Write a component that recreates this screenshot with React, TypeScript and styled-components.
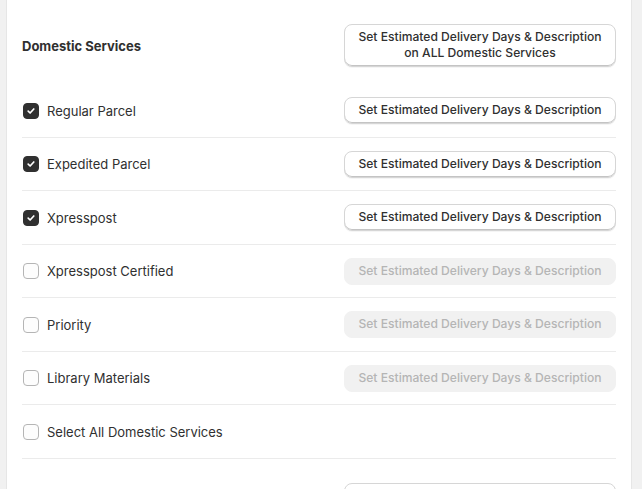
import React, {useState} from 'react';
import styled, {createGlobalStyle, css} from 'styled-components';

const GlobalStyle = createGlobalStyle`
    html, body {
        margin: 0;
        padding: 0;
        background: #f1f1f1;
        font-family: Inter, "Noto Sans", "Liberation Sans", sans-serif;
        color: #303030;
        -webkit-font-smoothing: antialiased;
    }
`;

interface Service {
    id: string;
    label: string;
    checked: boolean;
}

const initialServices: Service[] = [
    {id: 'regular', label: 'Regular Parcel', checked: true},
    {id: 'expedited', label: 'Expedited Parcel', checked: true},
    {id: 'xpresspost', label: 'Xpresspost', checked: true},
    {id: 'xpresspost-certified', label: 'Xpresspost Certified', checked: false},
    {id: 'priority', label: 'Priority', checked: false},
    {id: 'library', label: 'Library Materials', checked: false},
];

const BUTTON_LABEL = 'Set Estimated Delivery Days & Description';

const Page = styled.div`
    padding: 0 10px 0 6px;
    height: 489px;
    overflow: hidden;
`;

const Card = styled.div`
    background: #ffffff;
    border-left: 1px solid #e6e6e6;
    border-right: 1px solid #e6e6e6;
    padding: 24px 15px 0;
    min-height: 100%;
    box-sizing: border-box;
`;

const HeaderRow = styled.div<{next?: boolean}>`
    display: flex;
    align-items: center;
    justify-content: space-between;
    padding-top: ${({next}) => (next ? '24.5px' : '0')};
    padding-bottom: 17px;
`;

const Title = styled.h2`
    margin: 0;
    font-size: 13px;
    font-weight: 650;
    line-height: 20px;
    color: #303030;
`;

const Row = styled.div`
    display: flex;
    align-items: center;
    justify-content: space-between;
    min-height: 27px;
    padding: 13px 0 12.5px;
    border-bottom: 1px solid #ebebeb;
`;

const CheckLabel = styled.label`
    display: flex;
    align-items: center;
    gap: 8px;
    padding-left: 1px;
    font-size: 13px;
    font-weight: 400;
    line-height: 20px;
    color: #303030;
    cursor: pointer;
`;

const Box = styled.span<{checked: boolean}>`
    width: 16px;
    height: 16px;
    box-sizing: border-box;
    border-radius: 4px;
    display: inline-flex;
    align-items: center;
    justify-content: center;
    ${({checked}) => (checked ? css`
        background: #303030;
        border: 1px solid #303030;
    ` : css`
        background: #fdfdfd;
        border: 1px solid #b5b5b5;
    `)}
`;

const Button = styled.button`
    width: 272px;
    box-sizing: border-box;
    font-family: inherit;
    font-size: 12.1px;
    font-weight: 550;
    line-height: 16px;
    border-radius: 8px;
    text-align: center;
    padding: 4px 10px 5px;
    color: #303030;
    background: #ffffff;
    border: 1px solid #d6d6d6;
    box-shadow: inset 0 -1px 0 #c4c4c4, 0 1px 0 rgba(0, 0, 0, 0.04);
    cursor: pointer;

    &:disabled {
        color: #b5b5b5;
        background: #f1f1f1;
        border-color: #f1f1f1;
        box-shadow: none;
        cursor: default;
    }
`;

const Check = () => (
    <svg width='10' height='10' viewBox='0 0 10 10'>
        <path d='M2.2 5.2 L4.1 7 L7.8 3' fill='none' stroke='#ffffff' strokeWidth='1.7' strokeLinecap='round' strokeLinejoin='round'/>
    </svg>
);

const Checkbox = (props: {checked: boolean; label: string; onToggle: () => void}) => (
    <CheckLabel onClick={props.onToggle}>
        <Box checked={props.checked}>{props.checked && <Check/>}</Box>
        {props.label}
    </CheckLabel>
);

const App = () => {
    const [services, setServices] = useState(initialServices);
    const allChecked = services.every((s) => s.checked);

    const toggle = (id: string) => {
        setServices(services.map((s) => (s.id === id ? {...s, checked: !s.checked} : s)));
    };

    return (
        <Page>
            <GlobalStyle/>
            <Card>
                <HeaderRow>
                    <Title>Domestic Services</Title>
                    <Button>
                        {BUTTON_LABEL}
                        <br/>
                        on ALL Domestic Services
                    </Button>
                </HeaderRow>
                {services.map((s) => (
                    <Row key={s.id}>
                        <Checkbox checked={s.checked} label={s.label} onToggle={() => toggle(s.id)}/>
                        <Button disabled={!s.checked}>{BUTTON_LABEL}</Button>
                    </Row>
                ))}
                <Row>
                    <Checkbox
                        checked={allChecked}
                        label='Select All Domestic Services'
                        onToggle={() => setServices(services.map((s) => ({...s, checked: !allChecked})))}
                    />
                </Row>
                <HeaderRow next>
                    <Title>International Services</Title>
                    <Button>
                        {BUTTON_LABEL}
                        <br/>
                        on ALL International Services
                    </Button>
                </HeaderRow>
            </Card>
        </Page>
    );
};

export default App;
